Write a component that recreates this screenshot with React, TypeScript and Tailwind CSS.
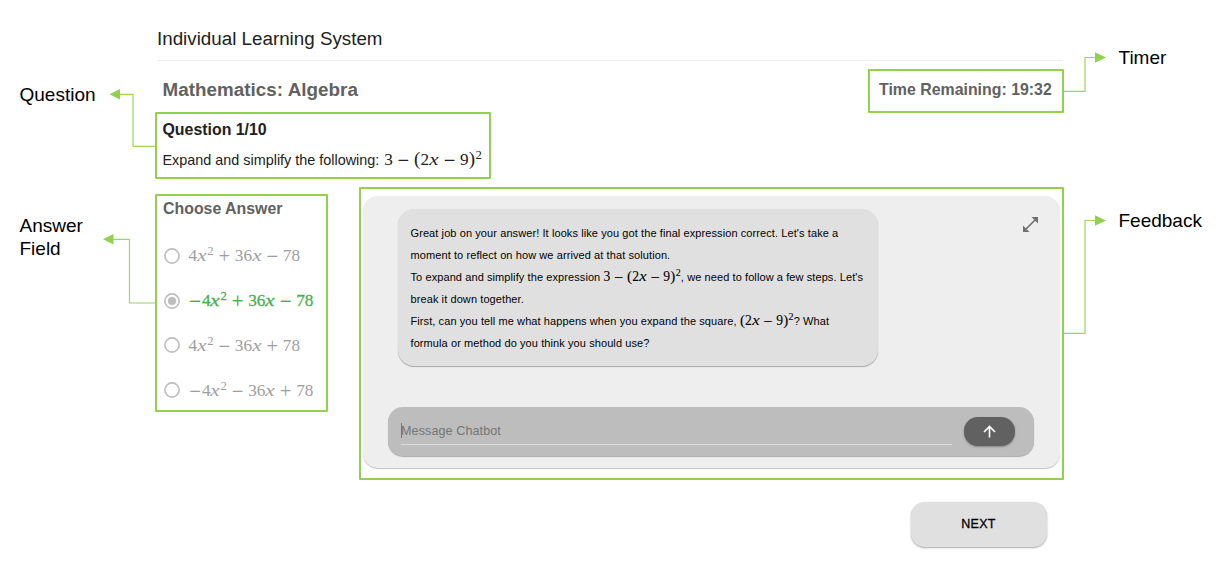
import React from "react";

type Token = { kind: "num" | "var" | "op" | "sup" | "paren"; text: string };

function tokenize(source: string): Token[] {
  const kindOf = (text: string): Token["kind"] => {
    if (text === "x") return "var";
    if (text === "+" || text === "−") return "op";
    if (text === "(" || text === ")") return "paren";
    if (text === "²") return "sup";
    return "num";
  };
  return source.split("").map((text) => ({ kind: kindOf(text), text }));
}

const tokenClass: Record<Token["kind"], string> = {
  num: "inline-block w-[0.5em] text-center",
  var: "inline-block w-[0.572em] origin-center scale-x-[1.22] text-center italic",
  op: "inline-block w-[0.778em] text-center",
  sup: "inline-block w-[0.4em] text-center",
  paren: "inline-block w-[0.389em] text-center",
};

function MathText({ children, className = "" }: { children: string; className?: string }) {
  const tokens = tokenize(children);
  return (
    <span className={`inline-block whitespace-nowrap font-['Liberation_Serif',serif] leading-none tracking-normal ${className}`}>
      {tokens.map((t, i) => {
        if (t.kind === "op") {
          const unary = i === 0;
          return (
            <span key={i} className={unary ? tokenClass.op : `${tokenClass.op} mx-[0.222em]`}>
              <span className="relative top-[0.1em] -mx-[0.2em] text-[1.2em] leading-[0]">{t.text}</span>
            </span>
          );
        }
        if (t.kind === "sup") {
          return (
            <span key={i} className={tokenClass.sup}>
              <span className="relative -top-[0.45em] text-[0.74em] leading-[0]">2</span>
            </span>
          );
        }
        if (t.kind === "paren") {
          return (
            <span key={i} className={tokenClass.paren}>
              <span className="text-[1.1em] leading-[0]">{t.text}</span>
            </span>
          );
        }
        return (
          <span key={i} className={tokenClass[t.kind]}>
            {t.text}
          </span>
        );
      })}
    </span>
  );
}

function Connector({ width, height, line, arrow }: { width: number; height: number; line: string; arrow: string }) {
  return (
    <svg width={width} height={height} viewBox={`0 0 ${width} ${height}`} className="block shrink-0" fill="none">
      <path d={line} stroke="#9bd65f" strokeWidth="1.2" />
      <path d={arrow} fill="#92d050" />
    </svg>
  );
}

const options = [
  { text: "4x²+36x−78", selected: false },
  { text: "−4x²+36x−78", selected: true },
  { text: "4x²−36x+78", selected: false },
  { text: "−4x²−36x+78", selected: false },
];

function Option({ text, selected }: { text: string; selected: boolean }) {
  return (
    <label className="flex h-[44.8px] items-center">
      <svg className="block size-4 shrink-0" viewBox="0 0 16 16" fill="none">
        <circle cx="8" cy="8" r="7.1" stroke="#bdbdbd" strokeWidth="1.6" />
        {selected && <circle cx="8" cy="8" r="4.1" fill="#bdbdbd" />}
      </svg>
      <MathText
        className={
          selected
            ? "ml-[8.5px] text-[17.2px] text-[#4caf50] [-webkit-text-stroke:0.3px_#4caf50]"
            : "ml-[8.5px] text-[17.2px] text-[#9e9e9e]"
        }
      >
        {text}
      </MathText>
    </label>
  );
}

const chatMath = "text-[13.6px] [-webkit-text-stroke:0.1px_#000]";

export default function App() {
  return (
    <div className="flex h-[570px] w-[1230px] overflow-hidden bg-white font-['Liberation_Sans',Arial,sans-serif] text-black">
      <aside className="w-[155px] shrink-0 pt-[83px] text-[19px] leading-[23px]">
        <div className="flex h-[131px] justify-between pl-[19.5px]">
          <span>Question</span>
          <div className="pt-[5px]">
            <Connector width={46} height={60} line="M10 6.3H24V58.3H46" arrow="M0.5 6.3L11 1V11.6Z" />
          </div>
        </div>
        <div className="flex justify-between pl-[19.5px]">
          <span className="w-[70px]">
            Answer
            <br />
            Field
          </span>
          <div className="pt-[19px]">
            <Connector width={52} height={72} line="M10 6.3H26.5V70H52" arrow="M0 6.3L10.5 1V11.6Z" />
          </div>
        </div>
      </aside>

      <main className="w-[909px] shrink-0">
        <header className="mr-px ml-[2px] h-[61px] border-b border-[#eeeeee] pt-[27px] text-[18.8px] leading-6 text-[#212121]">
          Individual Learning System
        </header>

        <div className="flex h-[125px] justify-between">
          <div>
            <h1 className="h-[51px] pt-[17px] pl-[7.5px] text-[18.8px] leading-6 font-bold tracking-[0.05px] text-[#616161]">
              Mathematics: Algebra
            </h1>
            <section className="h-[67px] w-[336px] rounded-[1px] border-2 border-[#92d050] pt-[6px] pl-[5.5px]">
              <h2 className="text-[15.9px] leading-5 font-bold text-[#212121]">Question 1/10</h2>
              <p className="mt-[10px] flex h-5 items-baseline text-[14.4px] leading-5 whitespace-nowrap text-[#212121]">
                Expand and simplify the following:
                <MathText className="ml-[5px] text-[17.2px]">3−(2x−9)²</MathText>
              </p>
            </section>
          </div>
          <div className="mt-2 h-11 w-[196px] rounded-[1px] border-2 border-[#92d050] pt-[9px] pl-[9px] text-[15.9px] leading-5 font-bold whitespace-nowrap text-[#616161]">
            Time Remaining: 19:32
          </div>
        </div>

        <div className="flex justify-between">
          <section className="mt-2 h-[218px] w-[173px] rounded-[1px] border-2 border-[#92d050] pt-[3px] pl-[6px]">
            <h2 className="text-[15.9px] leading-5 font-bold text-[#616161]">Choose Answer</h2>
            <div className="mt-[14.4px] pl-[1px]">
              {options.map((o) => (
                <Option key={o.text} text={o.text} selected={o.selected} />
              ))}
            </div>
          </section>

          <section className="mt-px h-[293px] w-[705px] rounded-[1px] border-2 border-[#92d050] pt-[7px] pl-[2px]">
            <div className="h-[272px] w-[697px] rounded-[15px] bg-[#eeeeee] pt-[13px] shadow-[0_1px_1px_rgba(0,0,0,0.25)]">
              <div className="flex items-start justify-between pr-[22px] pl-[34.5px]">
                <div className="h-[157px] w-[480px] rounded-2xl bg-[#e0e0e0] pt-[13px] pl-[13px] text-[11px] leading-[22px] tracking-[0.09px] whitespace-nowrap shadow-[0_1px_1px_rgba(0,0,0,0.3)]">
                  <div className="h-[22px]">Great job on your answer! It looks like you got the final expression correct. Let's take a</div>
                  <div className="h-[22px]">moment to reflect on how we arrived at that solution.</div>
                  <div className="h-[22px]">
                    To expand and simplify the expression <MathText className={chatMath}>3−(2x−9)²</MathText>, we need to follow a few steps. Let's
                  </div>
                  <div className="h-[22px]">break it down together.</div>
                  <div className="h-[22px]">
                    First, can you tell me what happens when you expand the square, <MathText className={chatMath}>(2x−9)²</MathText>? What
                  </div>
                  <div className="h-[22px]">formula or method do you think you should use?</div>
                </div>
                <svg className="mt-2 block" width="15" height="15" viewBox="0 0 15 15" fill="none">
                  <path d="M3 12L12 3" stroke="#707070" strokeWidth="1.6" />
                  <path d="M8.5 0H15V6.5ZM0 8.5V15H6.5Z" fill="#707070" />
                </svg>
              </div>

              <div className="mt-[41px] ml-[25px] flex h-[49px] w-[646px] rounded-[15px] bg-[#bdbdbd] pl-[13px] shadow-[0_1px_1px_rgba(0,0,0,0.28)]">
                <div className="mt-[14px] flex h-6 w-[551px] items-start border-b border-[#dcdcdc] text-[12.6px] leading-5 tracking-[0.08px] text-[#757575]">
                  <span className="mt-[2px] -mr-px h-[15px] w-px bg-[#757575]" />
                  Message Chatbot
                </div>
                <button className="mt-[10px] ml-[12px] flex h-[29px] w-[51px] items-center justify-center rounded-[14px] bg-[#616161] shadow-[0_1px_2px_rgba(0,0,0,0.3)]">
                  <svg width="13" height="13" viewBox="0 0 13 13" fill="none" stroke="#fff" strokeWidth="1.6">
                    <path d="M6.5 12.5V1.5M1 7L6.5 1.5L12 7" />
                  </svg>
                </button>
              </div>
            </div>
          </section>
        </div>

        <div className="flex justify-end pt-[22px] pr-[17.5px]">
          <button className="h-[45px] w-[136px] rounded-[14px] bg-[#e0e0e0] text-[12.5px] tracking-[0.3px] text-black shadow-[0_1px_2px_rgba(0,0,0,0.35)] [-webkit-text-stroke:0.3px_#000]">
            NEXT
          </button>
        </div>
      </main>

      <aside className="flex-1 pt-[46px] text-[19px] leading-[23px]">
        <div className="flex h-[163px]">
          <div className="pt-[5px]">
            <Connector width={43} height={42} line="M0 40.4H21V6.5H32" arrow="M42 6.5L31 1.2V11.8Z" />
          </div>
          <span className="pl-[11.5px]">Timer</span>
        </div>
        <div className="flex">
          <div className="pt-[5px]">
            <Connector width={43} height={121} line="M0 119.4H21V6.5H32" arrow="M42 6.5L31 1.2V11.8Z" />
          </div>
          <span className="pl-[11.5px]">Feedback</span>
        </div>
      </aside>
    </div>
  );
}
